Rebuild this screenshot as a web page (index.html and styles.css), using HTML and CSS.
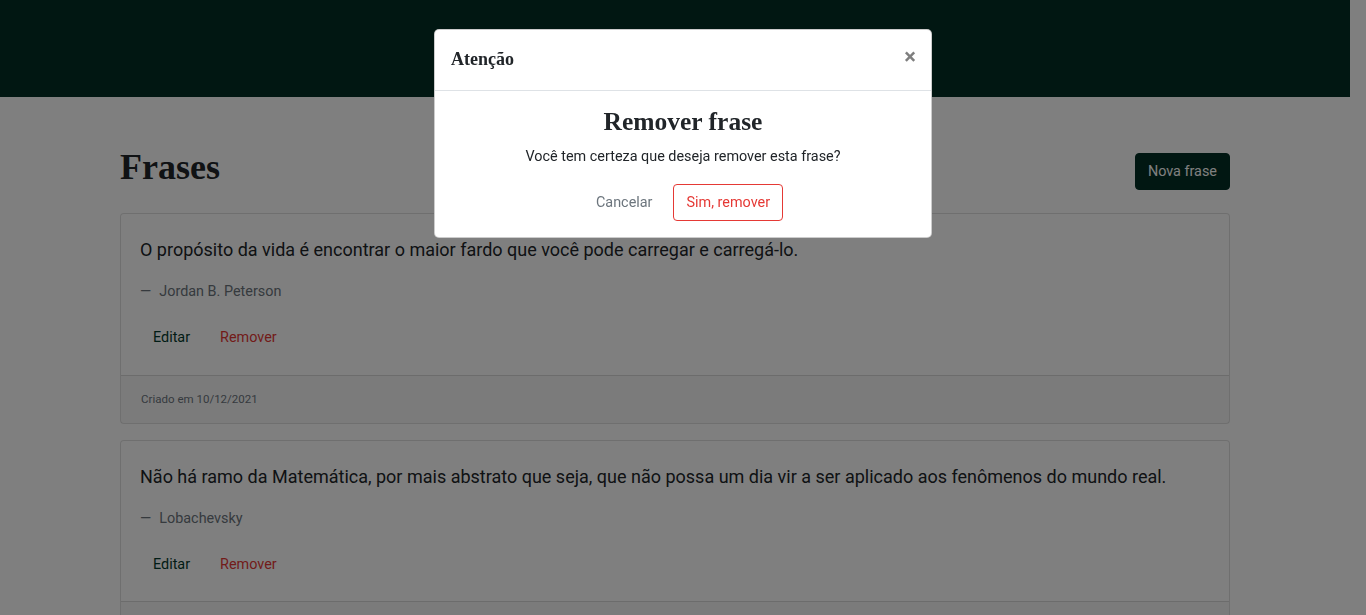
FILE: index.html
```html
<!DOCTYPE html>
<html lang="pt-BR">
<head>
<meta charset="utf-8">
<title>Frases</title>
<link rel="stylesheet" href="styles.css">
</head>
<body>
<header class="topbar"></header>
<main class="container">
  <div class="title-row">
    <h1 class="page-title">Frases</h1>
    <button class="btn btn-primary">Nova frase</button>
  </div>

  <article class="card">
    <div class="card-body">
      <p class="quote">O propósito da vida é encontrar o maior fardo que você pode carregar e carregá-lo.</p>
      <p class="author"><span class="dash">—</span>Jordan B. Peterson</p>
      <div class="actions">
        <button class="btn btn-link">Editar</button>
        <button class="btn btn-link danger">Remover</button>
      </div>
    </div>
    <div class="card-footer">Criado em 10/12/2021</div>
  </article>

  <article class="card">
    <div class="card-body">
      <p class="quote">Não há ramo da Matemática, por mais abstrato que seja, que não possa um dia vir a ser aplicado aos fenômenos do mundo real.</p>
      <p class="author"><span class="dash">—</span>Lobachevsky</p>
      <div class="actions">
        <button class="btn btn-link">Editar</button>
        <button class="btn btn-link danger">Remover</button>
      </div>
    </div>
    <div class="card-footer">Criado em 10/12/2021</div>
  </article>
</main>

<div class="backdrop"></div>
<div class="modal">
  <div class="modal-content">
    <div class="modal-header">
      <h5 class="modal-title">Atenção</h5>
      <button class="close" aria-label="Fechar">×</button>
    </div>
    <div class="modal-body">
      <h3 class="confirm-title">Remover frase</h3>
      <p class="confirm-text">Você tem certeza que deseja remover esta frase?</p>
      <div class="confirm-actions">
        <button class="btn btn-cancel">Cancelar</button>
        <button class="btn btn-outline-danger">Sim, remover</button>
      </div>
    </div>
  </div>
</div>
</body>
</html>
```

FILE: styles.css
```css
* { box-sizing: border-box; }

html, body {
  margin: 0;
  height: 100%;
}

body {
  font-family: Roboto, "Liberation Sans", Arial, sans-serif;
  font-size: 14.4px;
  line-height: 1.5;
  color: #212529;
  background: #ffffff;
  overflow: hidden;
  padding-right: 16px;
}

.topbar {
  height: 97px;
  background: #022e24;
}

.container {
  max-width: 1140px;
  margin: 0 auto;
  padding: 49px 15px 0;
}

.title-row {
  display: flex;
  align-items: center;
  justify-content: space-between;
  margin-bottom: 16px;
}

.page-title {
  font-family: "Liberation Serif", "Times New Roman", serif;
  font-size: 36px;
  line-height: 43px;
  font-weight: 700;
  margin: 0 0 8px;
}

.btn {
  font-family: inherit;
  font-size: 14.4px;
  line-height: 21.6px;
  padding: 6px 12px;
  border: 1px solid transparent;
  border-radius: 4px;
  background: transparent;
  cursor: pointer;
}

.btn-primary {
  background: #022e24;
  border-color: #022e24;
  color: #ffffff;
  padding: 6.7px 12px;
}

.card {
  border: 1px solid rgba(0, 0, 0, 0.125);
  border-radius: 4px;
  margin-bottom: 16px;
  background: #ffffff;
}

.card-body {
  padding: 21px 20px 18px 19px;
}

.quote {
  font-size: 18px;
  line-height: 30px;
  margin: 0 0 16px;
  color: #212529;
}

.author {
  margin: 0 0 17px;
  font-size: 14.4px;
  line-height: 21.6px;
  color: #6c757d;
}

.dash {
  display: inline-block;
  margin-right: 8px;
}

.actions {
  display: flex;
  gap: 4px;
}

.btn-link {
  color: #033a2c;
  padding: 6.7px 12px;
}

.btn-link.danger {
  color: #e53935;
}

.card-footer {
  padding: 15.3px 20px 14.4px;
  font-size: 11.52px;
  line-height: 17.3px;
  color: #6c757d;
  background: rgba(0, 0, 0, 0.03);
  border-top: 1px solid rgba(0, 0, 0, 0.125);
}

.backdrop {
  position: fixed;
  inset: 0;
  background: rgba(0, 0, 0, 0.5);
}

.modal {
  position: fixed;
  inset: 0;
  display: flex;
  justify-content: center;
  align-items: flex-start;
  padding-top: 29px;
}

.modal-content {
  width: 498px;
  background: #ffffff;
  border: 1px solid rgba(0, 0, 0, 0.2);
  border-radius: 5px;
}

.modal-header {
  display: flex;
  align-items: center;
  justify-content: space-between;
  padding: 15px 16px 17px;
  border-bottom: 1px solid #dee2e6;
}

.modal-title {
  font-family: "Liberation Serif", "Times New Roman", serif;
  font-size: 18px;
  line-height: 28px;
  font-weight: 700;
  margin: 0;
}

.close {
  font-family: Roboto, "Liberation Sans", Arial, sans-serif;
  font-size: 22px;
  font-weight: 700;
  line-height: 1;
  color: #000000;
  opacity: 0.5;
  background: transparent;
  border: 0;
  padding: 0;
  margin: -4px -1px 0 0;
}

.modal-body {
  padding: 15px 16px 16px;
  text-align: center;
}

.confirm-title {
  font-family: "Liberation Serif", "Times New Roman", serif;
  font-size: 25.5px;
  line-height: 31px;
  font-weight: 700;
  margin: 0 0 9px;
}

.confirm-text {
  margin: 0 0 16.5px;
  line-height: 21.6px;
}

.confirm-actions {
  display: flex;
  justify-content: center;
  gap: 8px;
}

.btn-cancel {
  color: #6c757d;
  padding: 6.7px 12px;
}

.btn-outline-danger {
  color: #e53935;
  border-color: #e53935;
  padding: 6.7px 12px;
}
```
